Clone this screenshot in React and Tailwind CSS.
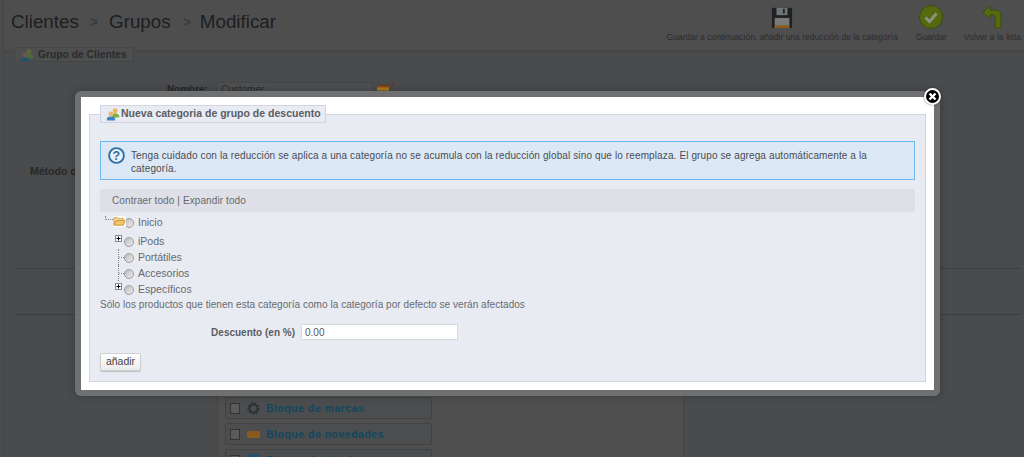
const People = ({ dim }) => (
  <svg width="14" height="14" viewBox="0 0 17 16" className="shrink-0">
    <circle cx="11" cy="4" r="3" fill={dim ? "#5d6a3c" : "#e8b860"} />
    <path d="M7 13c0-4 2-6 4-6s5 1 5 4v1z" fill={dim ? "#4a6d37" : "#7cb342"} />
    <circle cx="6" cy="8" r="3" fill={dim ? "#6b5a44" : "#eab676"} />
    <path d="M1 16v-2c0-2 2-3 5-3s5 1 5 3v2z" fill={dim ? "#27506f" : "#3f83c4"} />
  </svg>
);

const Radio = () => (
  <div className="w-[10px] h-[10px] shrink-0 rounded-full border border-[#9a9a9a] bg-gradient-to-br from-[#bcbcbc] to-[#eeeeee] mt-[4px]" />
);

const PlusBox = () => (
  <svg width="7" height="7" viewBox="0 0 7 7" className="absolute left-[15px] top-[2px]">
    <rect x="0.5" y="0.5" width="6" height="6" fill="#fff" stroke="#888" />
    <path d="M1.5 3.5h4M3.5 1.5v4" stroke="#000" />
  </svg>
);

const Folder = () => (
  <svg width="13" height="11" viewBox="0 0 14 12" className="absolute left-[13px] top-[2px]">
    <rect x="-1" y="-1" width="16" height="14" fill="#fbfbf5" />
    <path d="M1 10V2h4l1 1h5v2" fill="#fbe3a8" stroke="#c8913a" />
    <path d="M1 10l2-5h10l-2 5z" fill="#f5c66e" stroke="#c8913a" />
  </svg>
);

// fila del arbol de categorias
const TreeRow = ({ label, kind, className }) => (
  <div className={`flex h-[16px] ${className || ""}`}>
    <div className="relative w-[34px] h-[16px] flex justify-end shrink-0">
      {kind === "root" && (
        <div className="absolute left-[5px] top-[2px] w-[8px] h-[4px] border-l border-b border-dotted border-[#888]" />
      )}
      {kind === "leaf" && (
        <>
          <div className="absolute left-[18px] top-0 h-[16px] border-l border-dotted border-[#888]" />
          <div className="absolute left-[19px] top-[8px] w-[5px] border-t border-dotted border-[#888]" />
        </>
      )}
      {kind === "plus" && <PlusBox />}
      {kind === "root" && <Folder />}
      <Radio />
    </div>
    <span className="ml-[4px] text-[10.5px] leading-[16px] text-[#666a70]">{label}</span>
  </div>
);

const BgItem = ({ icon, label }) => (
  <div className="flex items-center h-[22px] w-[207px] shrink-0 rounded-[2px] border border-[#414243] bg-[#4c4d4e] pl-[4px]">
    <div className="w-[10px] h-[11px] border border-[#333] bg-[#5b5b5b] shrink-0" />
    <div className="w-[14px] h-[12px] ml-[6px] flex items-center justify-center shrink-0">{icon}</div>
    <span className="ml-[6px] text-[10.5px] leading-[14px] font-bold text-[#10485f] tracking-[0.5px] whitespace-nowrap">{label}</span>
  </div>
);

export default function App() {
  return (
    <div className="relative h-[457px] w-[1024px] overflow-hidden bg-[#4a4b4d] font-['Liberation_Sans',Arial,sans-serif]">
      {/* cabecera de fondo */}
      <header className="ml-[3px] h-[51px] border-l border-b border-[#444546] bg-[#4e4e4f] flex justify-between">
        <div className="flex items-center pl-[7px] h-[44px] text-[18.8px] text-[#1d1e1f] whitespace-nowrap">
          <span>Clientes</span>
          <span className="ml-[11px] text-[14px] font-bold text-[#393a3b]">&gt;</span>
          <span className="ml-[11px]">Grupos</span>
          <span className="ml-[12px] text-[14px] font-bold text-[#393a3b]">&gt;</span>
          <span className="ml-[9px]">Modificar</span>
        </div>
        <div className="flex text-[8.5px] leading-[12px] text-[#2b2c2d] whitespace-nowrap pt-[5px] pr-[3px] items-start">
          <div className="flex flex-col items-center">
            <svg width="24" height="24" viewBox="0 0 24 24" className="h-[24px] w-[22px]">
              <path d="M1 2h22v22H1z" fill="#1f2022" />
              <rect x="6" y="2" width="12" height="8" fill="#6f7476" />
              <rect x="13" y="3" width="2" height="5" fill="#1f2022" />
              <rect x="4" y="13" width="16" height="11" fill="#77797b" />
              <rect x="4" y="21" width="16" height="3" fill="#8a5a1e" />
            </svg>
            <span className="mt-[2px]">Guardar a continuación, añadir una reducción de la categoría</span>
          </div>
          <div className="flex flex-col items-center ml-[18px]">
            <svg width="24" height="24" viewBox="0 0 24 24">
              <circle cx="12" cy="12" r="11.5" fill="#55690f" stroke="#3c4b10" />
              <path d="M6.5 12.5l4 4 7-8" fill="none" stroke="#8e8f80" strokeWidth="3" />
            </svg>
            <span className="mt-[2px]">Guardar</span>
          </div>
          <div className="flex flex-col items-center ml-[17px]">
            <svg width="21" height="24" viewBox="0 0 21 24">
              <path d="M1 7l7-6v4h5c4 0 6 3 6 6v12h-6V12c0-1-1-2-2-2H8v4z" fill="#55690f" stroke="#3c4b10" />
            </svg>
            <span className="mt-[2px]">Volver a la lista</span>
          </div>
        </div>
      </header>

      {/* formulario de fondo */}
      <section className="ml-[3px] mt-[1px] border-t border-l border-[#444546]">
        <div className="-mt-[6px] ml-[10px] w-[120px] h-[15px] border border-[#444546] bg-[#4d4e4f] flex items-center pl-[5px]">
          <People dim />
          <span className="ml-[4px] text-[10.3px] font-bold text-[#2a2b2c] whitespace-nowrap">Grupo de Clientes</span>
        </div>
        <div className="mt-[20px] flex h-[16px] items-start">
          <span className="w-[204px] text-right text-[10px] leading-[16px] font-bold text-[#262728]">Nombre:</span>
          <div className="ml-[8px] w-[157px] h-[16px] border border-[#444546] bg-[#4e4f50] pl-[4px] text-[10px] leading-[14px] text-[#2a2b2c]">Customer</div>
          <div className="ml-[4px] mt-[3px] w-[12px] h-[8px] bg-gradient-to-b from-[#6e2a16] via-[#b08a18] to-[#6e2a16]" />
          <span className="ml-[3px] text-[9px] leading-[9px] text-[#7a2a22]">*</span>
        </div>
        <div className="mt-[66px] pl-[26px] text-[10.5px] leading-[14px] font-bold text-[#262728] whitespace-nowrap">Método de</div>
        <div className="mt-[90px] ml-[10px] mr-[3px] border-t border-[#3e3f40]" />
        <div className="mt-[45px] ml-[10px] mr-[3px] border-t border-[#3e3f40]" />
        <div className="flex">
          <div className="w-[213px] pl-[75px] pt-[11px] text-[10.5px] leading-[14px] font-bold text-[#262728]">Lista</div>
          <div className="w-[467px] h-[142px] border-l border-r border-[#444546] bg-[#4f4f50] pl-[7px] pt-[56px] flex flex-col gap-[4px] overflow-hidden">
            <BgItem label="Bloque" />
            <BgItem
              label="Bloque de marcas"
              icon={
                <svg width="13" height="13" viewBox="0 0 13 13">
                  <circle cx="6.5" cy="6.5" r="4.5" fill="none" stroke="#2f3031" strokeWidth="3" strokeDasharray="2 1" />
                  <circle cx="6.5" cy="6.5" r="4" fill="none" stroke="#2f3031" strokeWidth="1.5" />
                </svg>
              }
            />
            <BgItem
              label="Bloque de novedades"
              icon={<div className="w-[13px] h-[7px] rounded-[1px] bg-[#8a5a1e]" />}
            />
            <BgItem label="Bloque de tiendas" icon={<div className="w-[12px] h-[12px] bg-[#27506f]" />} />
          </div>
        </div>
      </section>

      {/* ventana modal */}
      <div className="absolute left-[75px] top-[91px] w-[865px] h-[305px] rounded-[6px] bg-[#6f7072] p-[6px] shadow-[0_0_8px_rgba(0,0,0,0.25)]">
        <div className="bg-white h-[293px] px-[8px] pt-[8px]">
          <fieldset className="h-[277px] border border-[#d2d4e0] bg-[#e9ebf3] px-[10px] pb-[0px]">
            <legend className="ml-0 h-[18px] w-[226px] border border-[#d2d4e0] bg-[#e9ebf3] flex items-center pl-[5px] box-border">
              <People />
              <span className="ml-[1px] text-[10.5px] font-bold text-[#5b5d63] whitespace-nowrap">Nueva categoria de grupo de descuento</span>
            </legend>
            <div className="mt-[18px] h-[39px] border border-[#6ab8ee] bg-[#dce8f6] flex items-start pl-[7px] pt-[5px] text-[10px] leading-[13px] text-[#4a4c52] tracking-[0.12px]">
              <svg width="17" height="17" viewBox="0 0 17 17" className="shrink-0">
                <circle cx="8.5" cy="8.5" r="7.4" fill="#e8f1fa" stroke="#2f6fa3" strokeWidth="1.9" />
                <text x="8.5" y="13" textAnchor="middle" fontSize="12.5" fontWeight="bold" fill="#2f6fa3" fontFamily="Liberation Sans">?</text>
              </svg>
              <p className="ml-[6px] mr-[40px] mt-[2px]">Tenga cuidado con la reducción se aplica a una categoría no se acumula con la reducción global sino que lo reemplaza. El grupo se agrega automáticamente a la categoría.</p>
            </div>
            <div className="mt-[9px] h-[23px] bg-[#dedfe7] flex items-center pl-[12px] text-[10px] text-[#666a70] tracking-[0.1px]">
              Contraer todo | Expandir todo
            </div>
            <div className="mt-[2px]">
              <TreeRow label="Inicio" kind="root" />
              <TreeRow label="iPods" kind="plus" className="mt-[3px]" />
              <TreeRow label="Portátiles" kind="leaf" />
              <TreeRow label="Accesorios" kind="leaf" />
              <TreeRow label="Específicos" kind="plus" />
            </div>
            <p className="h-[16px] text-[10px] leading-[16px] text-[#666a70] tracking-[0.05px] whitespace-nowrap">
              Sólo los productos que tienen esta categoría como la categoría por defecto se verán afectados
            </p>
            <div className="mt-[11px] flex items-center">
              <label htmlFor="descuento" className="w-[195px] text-right text-[10px] font-bold text-[#5b5d63]">Descuento (en %)</label>
              <input
                id="descuento"
                type="text"
                defaultValue="0.00"
                className="ml-[6px] w-[157px] h-[16px] border border-[#d8d8d8] bg-white px-[3px] text-[10px] text-[#555] outline-none"
              />
            </div>
            <button className="mt-[13px] block w-[41px] h-[18px] rounded-[2px] border border-[#cfcfcf] bg-gradient-to-b from-white to-[#ececec] text-[10.5px] text-[#444] shadow-[0_1px_1px_rgba(0,0,0,0.2)]">
              añadir
            </button>
          </fieldset>
        </div>
        <div className="absolute left-[849px] -top-[3px] w-[17px] h-[17px] rounded-full bg-black border-2 border-white shadow-[0_0_2px_rgba(0,0,0,0.6)] flex items-center justify-center">
          <svg width="9" height="9" viewBox="0 0 9 9">
            <path d="M1.5 1.5l6 6M7.5 1.5l-6 6" stroke="#fff" strokeWidth="2.4" />
          </svg>
        </div>
      </div>
    </div>
  );
}
